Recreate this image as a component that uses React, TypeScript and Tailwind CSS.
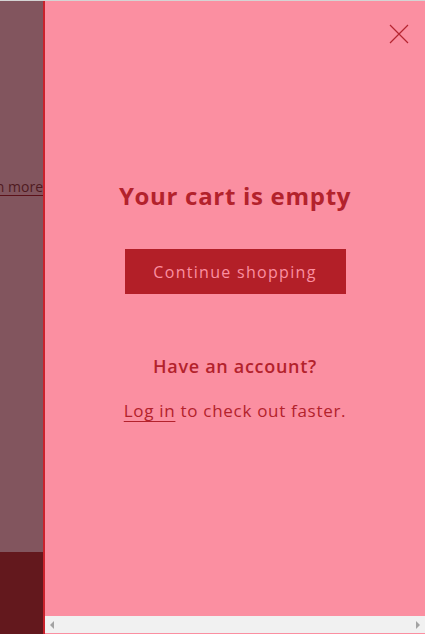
export default function App() {
  return (
    <div
      className="flex h-[634px] w-[425px] overflow-hidden border-t border-[#d4d4d4] bg-[#fb8fa1]"
      style={{ fontFamily: '"Open Sans", "Liberation Sans", sans-serif' }}
    >
      {/* page behind the overlay */}
      <div className="flex w-[43px] shrink-0 flex-col overflow-hidden bg-[#82555e]">
        <div className="flex h-[551px] flex-col justify-start overflow-hidden">
          <div className="mt-[175px] flex justify-end whitespace-nowrap">
            <span className="text-[14px] text-[#4f1a21] underline decoration-[#5b1119] underline-offset-[3px]">
              Learn more
            </span>
          </div>
        </div>
        <div className="flex-1 bg-[#63181d]" />
      </div>
      <div className="w-[2px] shrink-0 bg-[#c9222c]" />

      {/* drawer */}
      <div className="flex flex-1 flex-col">
        <div className="flex justify-end pr-[15px] pt-[22px]">
          <button className="flex h-[22px] w-[22px] items-center justify-center text-[#b52531]">
            <svg width="20" height="20" viewBox="0 0 20 20" fill="none" stroke="currentColor" strokeWidth="1.2">
              <path d="M1 1L19 19M19 1L1 19" />
            </svg>
          </button>
        </div>
        <div className="flex flex-1 flex-col items-center">
          <h2 className="mt-[136px] text-[24px] font-bold leading-[30px] tracking-[0.7px] text-[#b3222c]">
            Your cart is empty
          </h2>
          <button className="mt-[38px] flex h-[45px] w-[221px] items-center justify-center bg-[#b31f28] text-[16px] tracking-[1.3px] text-[#fb8fa1]">
            Continue shopping
          </button>
          <p className="mt-[59px] text-[18px] font-semibold tracking-[0.7px] text-[#b3222c]">
            Have an account?
          </p>
          <p className="mt-[18px] text-[17px] tracking-[0.7px] text-[#b3222c]">
            <a className="underline underline-offset-[4px]">Log in</a> to check out faster.
          </p>
        </div>
        {/* horizontal scrollbar */}
        <div className="mb-[1px] flex h-[17px] items-center justify-between bg-[#f1f1f1] px-[5px]">
          <div className="h-0 w-0 border-y-[4px] border-r-[4px] border-y-transparent border-r-[#a3a3a3]" />
          <div className="h-0 w-0 border-y-[4px] border-l-[4px] border-y-transparent border-l-[#a3a3a3]" />
        </div>
      </div>
    </div>
  );
}
